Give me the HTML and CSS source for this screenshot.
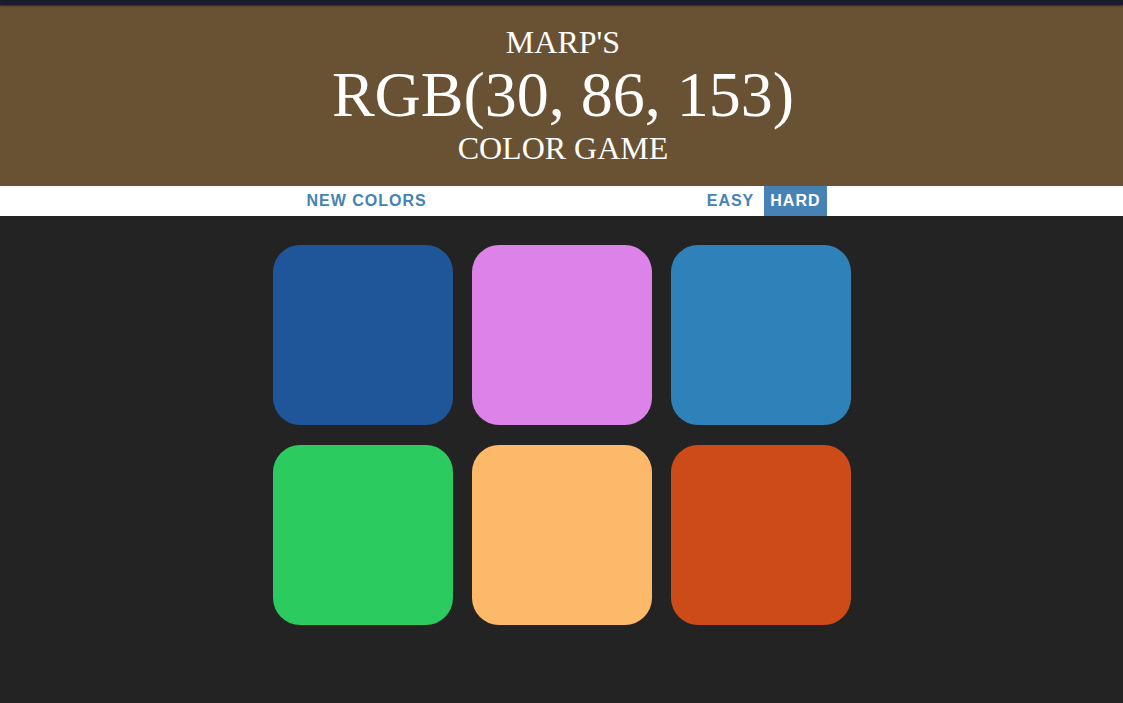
FILE: index.html
```html
<!DOCTYPE html>
<html lang="en">
<head>
<meta charset="utf-8">
<title>Color Game</title>
<link rel="stylesheet" href="styles.css">
</head>
<body>
<div class="topbar"></div>
<h1 class="title">
  <span class="line">Marp's</span>
  <span class="line rgb">RGB(30, 86, 153)</span>
  <span class="line">Color Game</span>
</h1>
<div class="stripe">
  <button class="btn">New Colors</button>
  <span class="message"></span>
  <button class="btn">Easy</button>
  <button class="btn selected">Hard</button>
</div>
<div class="board">
  <div class="square sq1"></div>
  <div class="square sq2"></div>
  <div class="square sq3"></div>
  <div class="square sq4"></div>
  <div class="square sq5"></div>
  <div class="square sq6"></div>
</div>
</body>
</html>
```
FILE: styles.css
```css
html, body {
  margin: 0;
  padding: 0;
}
body {
  background: #232323;
  font-family: "Liberation Sans", Arial, sans-serif;
  height: 703px;
  overflow: hidden;
}
.topbar {
  height: 5px;
  background: #1d1d29;
  box-shadow: 0 1px 2px rgba(0, 0, 0, 0.5);
  position: relative;
  z-index: 1;
}
.title {
  margin: 0;
  padding: 20px 0 20px 3px;
  background: #695233;
  color: #ffffff;
  font-family: "Liberation Serif", "Times New Roman", serif;
  font-weight: normal;
  font-size: 32px;
  line-height: 1.1;
  text-align: center;
  text-transform: uppercase;
}
.line {
  display: block;
}
.rgb {
  font-size: 64px;
}
.stripe {
  height: 30px;
  background: #ffffff;
  display: flex;
  justify-content: center;
  align-items: stretch;
  gap: 4px;
  padding-left: 4px;
}
.btn {
  border: none;
  background: none;
  margin: 0;
  padding: 1px 6px 0;
  font-family: "Liberation Sans", Arial, sans-serif;
  font-size: 16px;
  font-weight: 700;
  letter-spacing: 1px;
  text-transform: uppercase;
  color: #4682b4;
}
.btn.selected {
  color: #ffffff;
  background: #4682b4;
}
.message {
  width: 260px;
}
.board {
  display: grid;
  grid-template-columns: repeat(3, 180px);
  column-gap: 19px;
  row-gap: 20px;
  justify-content: center;
  padding-top: 29px;
  padding-left: 1px;
}
.square {
  width: 180px;
  height: 180px;
  border-radius: 27px;
}
.sq1 { background: #1e5699; }
.sq2 { background: #dd82e8; }
.sq3 { background: #2f82b9; }
.sq4 { background: #2ccb60; }
.sq5 { background: #fdb96a; }
.sq6 { background: #cc4b18; }
```
